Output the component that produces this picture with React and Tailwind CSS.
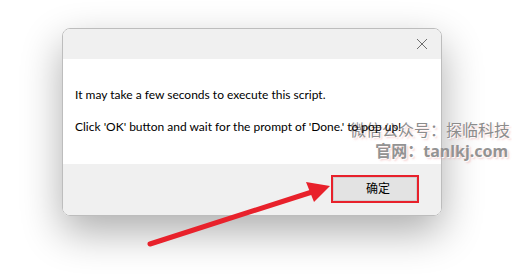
import React from 'react';

// Message box with annotation arrow and watermark

const FONT = { fontFamily: '"Noto Sans", "Open Sans", "Noto Sans CJK SC", sans-serif' };

export default function App() {
  return (
    <div className="relative w-[512px] h-[274px] bg-white overflow-hidden" style={FONT}>
      <div className="pt-[28px] pl-[62px]">
        <div className="w-[380px] rounded-[8px] border border-[#bdbdbd] overflow-hidden shadow-[0_16px_40px_rgba(0,0,0,0.32)]">
          {/* title bar */}
          <div className="h-[30px] bg-[#f0f0f0] flex items-center justify-end pr-[10px]">
            <svg width="12" height="12" viewBox="0 0 12 12" className="mr-[3px]">
              <path d="M1 1L11 11M11 1L1 11" stroke="#6e6e6e" strokeWidth="1" />
            </svg>
          </div>
          {/* body - text sits above the watermark */}
          <div
            className="h-[105px] bg-white pl-[12px] pt-[28px] text-[12px] leading-[16px] text-black"
            style={{ fontFamily: 'Lato, "Noto Sans", sans-serif' }}
          >
            <p className="relative z-[2]">It may take a few seconds to execute this script.</p>
            <p className="relative z-[2] mt-[16px]">Click 'OK' button and wait for the prompt of 'Done.' to pop up!</p>
          </div>
          {/* footer */}
          <div className="h-[51px] bg-[#f0f0f0] flex justify-end items-start pt-[11px] pr-[22px]">
            <div className="border-2 border-[#e8212b]">
              <button className="w-[84px] h-[24px] bg-[#e3e3e3] border border-[#cfcfcf] text-[12px] text-black flex items-center justify-center pl-[6px]">
                确定
              </button>
            </div>
          </div>
        </div>
      </div>

      {/* watermark */}
      <div
        className="absolute z-[1] left-[350px] top-[120px] text-[16px] leading-[21px] text-[#8c8c8c] text-right"
        style={{ textShadow: '1px 1px 0 rgba(255,255,255,0.9), 2px 2px 2px rgba(230,120,120,0.35)' }}
      >
        <div>微信公众号：探临科技</div>
        <div className="font-bold pr-[2px] text-[#939393]">官网：tanlkj.com</div>
      </div>

      {/* arrow */}
      <svg className="absolute z-[3] left-0 top-0" width="512" height="274">
        <line x1="150" y1="244" x2="312" y2="192" stroke="#e8212b" strokeWidth="5" strokeLinecap="round" />
        <path d="M330 186 L306 182 L314 202 Z" fill="#e8212b" />
      </svg>
    </div>
  );
}
